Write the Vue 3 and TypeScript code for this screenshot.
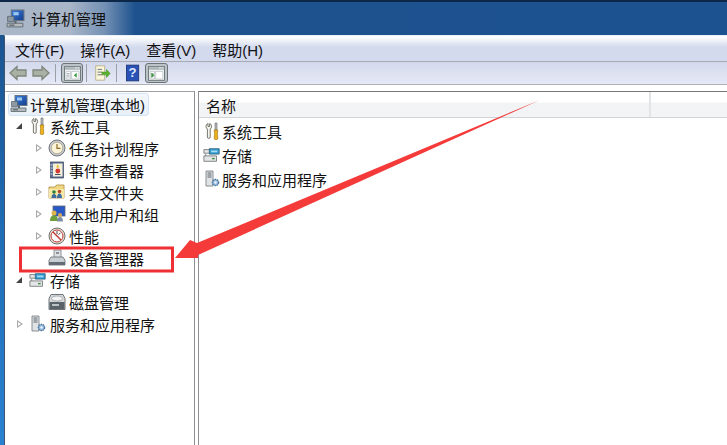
<template>
  <div class="win">
    <svg class="defs" width="0" height="0">
      <defs>
        <linearGradient id="screen" x1="0" y1="0" x2="1" y2="1"><stop offset="0" stop-color="#3a7fdc" /><stop offset="1" stop-color="#123c8c" /></linearGradient>
        <symbol id="computer" viewBox="0 0 18 18">
          <rect x="5" y=".5" width="12" height="10" fill="url(#screen)" stroke="#6a7480" />
          <path d="M7 2.500h5v3H7z" fill="#9cc8f2" />
          <path d="M1.500 6.500h6v5h-6z" fill="#8c98a2" stroke="#59636b" stroke-width=".7" />
          <path d="M1 13h15v3.500H1z" fill="#b4bbbf" stroke="#59636b" stroke-width=".8" />
          <path d="M9 11v2" stroke="#59636b" stroke-width="2" />
          <path d="M3 14.800h5" stroke="#4d585f" />
        </symbol>
        <symbol id="tools" viewBox="0 0 16 18">
          <path d="M4 1.500a3 3 0 0 0-2 3c0 1.200.6 2 1.400 2.500V15a1.400 1.400 0 0 0 2.800 0V7c.8-.5 1.400-1.300 1.400-2.500a3 3 0 0 0-2-3v3H4z" fill="#f6f6f0" stroke="#6a6a60" stroke-width=".9" />
          <path d="M11 1h2v7h-2z" fill="#b8bcc0" stroke="#666" stroke-width=".6" />
          <path d="M10.200 8h3.600l-.4 3.500 .4 4.500a1.800 1.800 0 0 1-3.600 0l.4-4.500z" fill="#edb21c" stroke="#9a6e08" stroke-width=".6" />
        </symbol>
        <symbol id="clock" viewBox="0 0 18 18">
          <circle cx="9" cy="9" r="8" fill="#c9ccd0" stroke="#6f7378" />
          <circle cx="9" cy="9" r="5.800" fill="#fbf3d8" stroke="#a09a80" stroke-width=".7" />
          <path d="M9 5v4.300h3.400" fill="none" stroke="#8a6a20" stroke-width="1.200" />
        </symbol>
        <symbol id="event" viewBox="0 0 16 18">
          <rect x="1.500" y="1" width="13" height="16" fill="#5a6f96" stroke="#39435c" stroke-width=".7" />
          <rect x="4" y="2.500" width="9.500" height="13" fill="#f4efd8" />
          <path d="M8.700 3.500l1.600 3H7.200z" fill="#e8b818" />
          <circle cx="8.800" cy="10" r="2.400" fill="#d23a30" />
          <path d="M6 13.500h5.500" stroke="#46506a" />
          <path d="M1.500 4h2M1.500 7h2M1.500 10h2M1.500 13h2" stroke="#d5dbe8" />
        </symbol>
        <symbol id="share" viewBox="0 0 18 18">
          <path d="M1 4h6l1.500-2H16v13H1z" fill="#f2d783" stroke="#a98c3a" stroke-width=".8" />
          <path d="M1 6h15v9H1z" fill="#f8e8a8" />
          <circle cx="6" cy="9" r="1.800" fill="#2f7f3a" />
          <circle cx="11.500" cy="8.500" r="1.800" fill="#b54a26" />
          <path d="M3.500 15c0-3 1-4 2.500-4s2.500 1 2.500 4zM9 15c0-3 1-4.500 2.500-4.500S14 12 14 15z" fill="#3d6d9f" />
        </symbol>
        <symbol id="users" viewBox="0 0 18 18">
          <rect x="5" y="1" width="12" height="10" fill="#2a58c4" stroke="#5e6b78" stroke-width=".8" />
          <circle cx="6" cy="8" r="2.500" fill="#dfb44a" />
          <path d="M2 16c0-4 1.500-5.500 4-5.500s4 1.500 4 5.500z" fill="#6f9e3c" />
          <circle cx="12" cy="10" r="2" fill="#d8a85a" />
          <path d="M9 16.500c0-3 1-4.500 3-4.500s3 1.500 3 4.500z" fill="#7c8ea5" />
        </symbol>
        <symbol id="perf" viewBox="0 0 18 18">
          <circle cx="9" cy="9" r="8" fill="#e6e2da" stroke="#70706c" />
          <circle cx="9" cy="9" r="6" fill="#fff" stroke="#c23a30" stroke-width="1" />
          <path d="M5 5l8 8" stroke="#c23a30" stroke-width="1.400" />
          <path d="M9 4v3M12.500 6l-2 1.500" stroke="#333" stroke-width=".9" />
        </symbol>
        <symbol id="device" viewBox="0 0 18 18">
          <path d="M6 1h7v9H6z" fill="#dde1e4" stroke="#777e84" stroke-width=".8" />
          <path d="M8 3h3v2H8z" fill="#8b9298" />
          <path d="M3 8h12l2 3v5H1v-5z" fill="#c8ced2" stroke="#626a70" stroke-width=".8" />
          <path d="M1 13h16v3H1z" fill="#646d74" />
        </symbol>
        <symbol id="storage" viewBox="0 0 20 18">
          <path d="M1 3h10v4H1zM1 10h14v6H1z" fill="#e3e5e6" stroke="#6c7072" stroke-width=".9" />
          <path d="M7 2h11v6H7z" fill="#2f9ad0" stroke="#33627e" stroke-width=".9" />
          <path d="M9 4h7v2H9z" fill="#a6dcf2" />
          <path d="M3 8v2" stroke="#6c7072" />
          <path d="M10 13h3" stroke="#3f8f40" stroke-width="1.500" />
        </symbol>
        <symbol id="disk" viewBox="0 0 18 18">
          <path d="M3 1.500h12l2 4v11H1v-11z" fill="#d6d9db" stroke="#62686c" stroke-width=".9" />
          <ellipse cx="9" cy="5.500" rx="5.500" ry="2.500" fill="#f2f3f4" stroke="#888" stroke-width=".6" />
          <path d="M1.500 9h15v7h-15z" fill="#596268" />
          <path d="M4 12h7" stroke="#dfe3e5" stroke-width="1.500" />
        </symbol>
        <symbol id="services" viewBox="0 0 16 18">
          <path d="M2 1h7v15H2z" fill="#dfe3e6" stroke="#70777c" stroke-width=".8" />
          <path d="M3.500 3h4M3.500 5h4M3.500 7h4" stroke="#5d6468" />
          <circle cx="11.500" cy="12.500" r="3.200" fill="#8cb4d8" stroke="#4d7598" stroke-width="1.200" stroke-dasharray="1.500 .8" />
          <circle cx="11.500" cy="12.500" r="1.200" fill="#f4f7fa" />
        </symbol>
        <symbol id="pane" viewBox="0 0 22 20">
          <rect x="1.500" y="2" width="19" height="16" fill="#f3f5f5" stroke="#5f6a6c" />
          <path d="M2 2.500h18v3H2z" fill="#aab3b8" />
          <path d="M17 3.500h2M14 3.500h2" stroke="#fff" />
          <path d="M3.500 7.500h5v9h-5zM10 7.500h8.500v9H10z" fill="#fff" stroke="#a6aeb0" stroke-width=".7" />
          <path d="M4.500 10h3M4.500 12h3M4.500 14h3" stroke="#7c8790" stroke-width=".8" />
        </symbol>
      </defs>
    </svg>

    <header class="titlebar">
      <svg class="title-icon"><use href="#computer" /></svg>
      <span class="title">计算机管理</span>
    </header>

    <div class="body">
      <nav class="menubar">
        <span v-for="m in menus" :key="m">{{ m }}</span>
      </nav>

      <div class="toolbar">
        <svg class="nav-arrow" viewBox="0 0 18 16"><path d="M1 8l7-6.500v3.500h9v6H8v3.500z" fill="#a9b0a4" stroke="#7f857b" stroke-width="1.300" /></svg>
        <svg class="nav-arrow" viewBox="0 0 18 16"><path d="M17 8l-7-6.500v3.500H1v6h9v3.500z" fill="#a9b0a4" stroke="#7f857b" stroke-width="1.300" /></svg>
        <i class="sep" />
        <button class="tool on first">
          <svg viewBox="0 0 22 20"><use href="#pane" /><path d="M16 9v6l-3.500-3z" fill="#3b9a43" /></svg>
        </button>
        <i class="sep" />
        <svg class="tool-plain" viewBox="0 0 20 20">
          <path d="M3 2h10v16H3z" fill="#fbf6d8" stroke="#b6b08c" />
          <path d="M5 6h5M5 9h5M5 12h5" stroke="#5f6d7a" />
          <path d="M10 9h5V6l4 4.500-4 4.500v-3h-5z" fill="#5cb32f" stroke="#3f8a1c" stroke-width=".6" />
        </svg>
        <i class="sep sep-wide" />
        <svg class="tool-plain help" viewBox="0 0 16 20">
          <rect x=".5" y="1" width="14" height="18" fill="#2a52b6" stroke="#1d3478" />
          <text x="7.500" y="15" class="help-q">?</text>
        </svg>
        <button class="tool on">
          <svg viewBox="0 0 22 20"><use href="#pane" /><path d="M5 9v6l3.500-3z" fill="#3b9a43" /></svg>
        </button>
      </div>

      <div class="gutter">
        <aside class="tree">
          <div class="row root">
            <span class="root-sel">
              <svg class="ico"><use href="#computer" /></svg>
              <span>计算机管理(本地)</span>
            </span>
          </div>
          <div v-for="n in tree" :key="n.label" class="row" :class="'lv' + n.level">
            <span class="tw" :class="n.toggle" />
            <svg class="ico"><use :href="'#' + n.icon" /></svg>
            <span class="lbl">{{ n.label }}</span>
          </div>
        </aside>

        <main class="list">
          <div class="list-head">
            <span class="col-name">名称</span>
            <span class="col-rest" />
          </div>
          <div class="list-rows">
            <div v-for="r in rows" :key="r.label" class="list-row">
              <svg class="ico"><use :href="'#' + r.icon" /></svg>
              <span>{{ r.label }}</span>
            </div>
          </div>
        </main>
      </div>
    </div>

    <!-- annotation drawn over the screenshot -->
    <svg class="markup" viewBox="0 0 727 445">
      <rect x="20.500" y="248" width="152" height="23" fill="none" stroke="#ee2f34" stroke-width="3" />
      <path d="M540 100L197 243 190 240 175 258 198 258 198 255z" fill="#f53a3a" />
    </svg>
  </div>
</template>

<script setup lang="ts">
interface TreeNode {
  label: string
  icon: string
  level: number
  toggle: "open" | "closed" | "none"
}

const menus = ["文件(F)", "操作(A)", "查看(V)", "帮助(H)"]

const tree: TreeNode[] = [
  { label: "系统工具", icon: "tools", level: 1, toggle: "open" },
  { label: "任务计划程序", icon: "clock", level: 2, toggle: "closed" },
  { label: "事件查看器", icon: "event", level: 2, toggle: "closed" },
  { label: "共享文件夹", icon: "share", level: 2, toggle: "closed" },
  { label: "本地用户和组", icon: "users", level: 2, toggle: "closed" },
  { label: "性能", icon: "perf", level: 2, toggle: "closed" },
  { label: "设备管理器", icon: "device", level: 2, toggle: "none" },
  { label: "存储", icon: "storage", level: 1, toggle: "open" },
  { label: "磁盘管理", icon: "disk", level: 2, toggle: "none" },
  { label: "服务和应用程序", icon: "services", level: 1, toggle: "closed" },
]

const rows = [
  { label: "系统工具", icon: "tools" },
  { label: "存储", icon: "storage" },
  { label: "服务和应用程序", icon: "services" },
]
</script>

<style>
html,
body {
  margin: 0;
  overflow: hidden;
}
</style>

<style scoped>
.win {
  position: relative;
  width: 727px;
  height: 445px;
  display: flex;
  flex-direction: column;
  overflow: hidden;
  font-family: "Liberation Sans", "Noto Sans CJK SC", sans-serif;
  font-size: 15px;
  color: #111;
  background: linear-gradient(180deg, #1b4f8a 0, #1f6cb4 50%, #2a82d2 100%);
}
.defs {
  position: absolute;
}
.titlebar {
  height: 33px;
  flex: none;
  margin-top: 2px;
  display: flex;
  align-items: center;
  padding-left: 6px;
  gap: 6px;
  background: linear-gradient(90deg, #a9b7c9 0, #a8b6c8 70px, #7390b4 105px, #1d528e 135px, #1c5290 100%);
  box-shadow: 0 -2px 0 #0c2748;
}
.title-icon {
  width: 19px;
  height: 20px;
}
.title {
  font-size: 15px;
  color: #111;
}
.body {
  flex: 1;
  margin-left: 4px;
  display: flex;
  flex-direction: column;
  min-height: 0;
  border-left: 1px solid #3c5470;
  border-top: 1px solid #e8f0f8;
  background: #fff;
}
.menubar {
  height: 26px;
  flex: none;
  display: flex;
  align-items: center;
  gap: 16px;
  padding: 1px 0 0 10px;
  box-sizing: border-box;
  background: linear-gradient(180deg, #fff 0, #f6f8fb 3px, #d4daee 11px, #d4daee 100%);
  border-bottom: 1px solid #a9a9b2;
}
.toolbar {
  height: 23px;
  flex: none;
  display: flex;
  align-items: center;
  padding-left: 4px;
  box-sizing: border-box;
  background: linear-gradient(180deg, #d3d9ec 0, #e6e9f6 100%);
  border-bottom: 1px solid #b1b1b8;
}
.nav-arrow {
  width: 18px;
  height: 16px;
  margin-right: 5px;
}
.sep {
  width: 1px;
  height: 18px;
  background: #9aa0a8;
  margin: 0 5px 0 0;
}
.sep-wide {
  margin: 0 9px 0 5px;
}
.tool {
  width: 23px;
  height: 20px;
  padding: 0;
  margin: 0 3px 0 0;
  border: 1px solid #6c7478;
  border-radius: 3px;
  background: #bcc4ca;
  display: flex;
  align-items: center;
  justify-content: center;
}
.tool.first {
  width: 22px;
}
.tool svg {
  width: 19px;
  height: 17px;
}
.tool-plain {
  width: 18px;
  height: 20px;
  margin-left: 1px;
}
.help {
  width: 14px;
  height: 20px;
  margin-left: 0;
  margin-right: 5px;
}
.help-q {
  font-size: 15px;
  font-weight: 700;
  fill: #dfe8ff;
  text-anchor: middle;
}
.gutter {
  flex: 1;
  min-height: 0;
  display: flex;
  padding-top: 6px;
  background: #fff;
}
.tree {
  width: 190px;
  flex: none;
  box-sizing: border-box;
  padding-top: 1px;
  border-top: 1px solid #a0a0a6;
  border-right: 1px solid #8d8d93;
  border-left: 1px solid #fff;
}
.row {
  height: 22px;
  display: flex;
  align-items: center;
  white-space: nowrap;
}
.root {
  padding-left: 2px;
}
.root-sel {
  height: 21px;
  display: flex;
  align-items: center;
  gap: 2px;
  padding: 0 3px 0 1px;
  border: 1px solid #d4e4f4;
  border-radius: 3px;
  background: linear-gradient(180deg, #f4f8fc, #e8eff7);
}
.lv1 {
  padding-left: 9px;
}
.lv2 {
  padding-left: 28px;
}
.tw {
  width: 9px;
  height: 9px;
  flex: none;
  margin-right: 5px;
  position: relative;
}
.tw.closed::before {
  content: "";
  position: absolute;
  left: 2px;
  top: 0;
  border-left: 6px solid #a8a8a8;
  border-top: 4.5px solid transparent;
  border-bottom: 4.5px solid transparent;
}
.tw.closed::after {
  content: "";
  position: absolute;
  left: 3px;
  top: 2px;
  border-left: 3px solid #fff;
  border-top: 2.5px solid transparent;
  border-bottom: 2.5px solid transparent;
}
.tw.open::before {
  content: "";
  position: absolute;
  left: 1px;
  top: 1px;
  border-right: 6px solid #444;
  border-top: 6px solid transparent;
}
.ico {
  width: 18px;
  height: 18px;
  flex: none;
}
.lbl {
  margin-left: 3px;
}
.list {
  flex: 1;
  min-width: 0;
  margin-left: 3px;
  border-left: 1px solid #8d8d93;
  border-top: 1px solid #777;
}
.list-head {
  height: 26px;
  display: flex;
  box-sizing: border-box;
  border-bottom: 1px solid #d2d4d6;
  background: linear-gradient(180deg, #fff 0, #fff 40%, #f1f3f5 45%, #f3f4f6 100%);
}
.col-name {
  width: 443px;
  padding-left: 7px;
  line-height: 29px;
  border-right: 2px solid #e2e4e6;
}
.list-rows {
  padding-top: 1px;
}
.list-row {
  height: 24px;
  display: flex;
  align-items: center;
  padding-left: 4px;
}
.list-row .ico {
  margin-right: 1px;
}
.markup {
  position: absolute;
  left: 0;
  top: 0;
  width: 727px;
  height: 445px;
  pointer-events: none;
}
</style>
